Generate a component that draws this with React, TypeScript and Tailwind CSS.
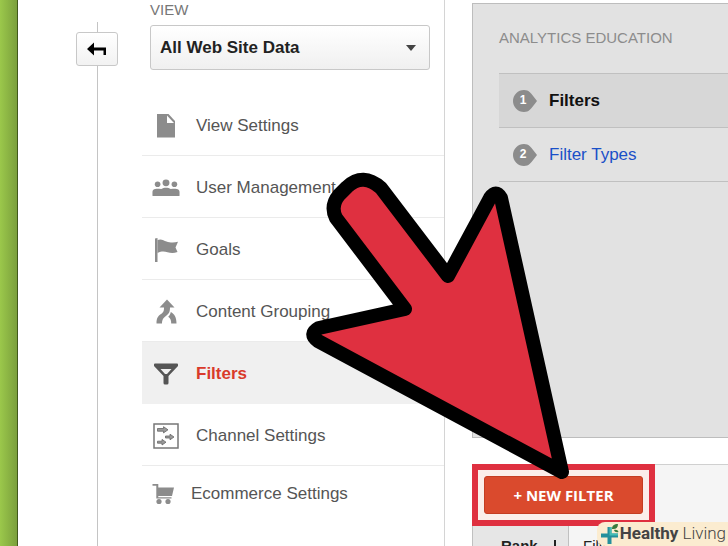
import React from "react";

const DocIcon = () => (
  <svg width="28" height="28" viewBox="0 0 28 28" fill="#8c8c8c">
    <path d="M5 2h11.500l6.500 7v16.500H5z" />
    <path d="M15 3.500v7.500h7z" fill="#fff" />
  </svg>
);

const UsersIcon = () => (
  <svg width="30" height="20" viewBox="0 0 30 20" fill="#8c8c8c">
    <circle cx="6" cy="6" r="3" />
    <circle cx="15" cy="4.500" r="3.700" />
    <circle cx="24" cy="6" r="3" />
    <path d="M.5 18v-4c0-2 2-3.200 4.500-3.200 2 0 3.500.2 5 .2 1.500-1 3-1.400 5-1.400s3.500.4 5 1.400c1.500 0 3-.2 5-.2 2.500 0 4.500 1.200 4.500 3.200v4q0 .7-.7.700H1.200q-.7 0-.7-.7z" />
  </svg>
);

const FlagIcon = () => (
  <svg width="26" height="26" viewBox="0 0 26 26" fill="#8c8c8c">
    <path d="M2 1.500 4.500 1v24H2z" />
    <path d="M4.500 3c4-1.500 6 .5 9 1.500s7 1.500 11.500.3l-2.500 5.700 2 4.500c-4 1.500-7 1-10 .2s-6-1.200-10 .8z" />
  </svg>
);

const MergeIcon = () => (
  <svg width="26" height="26" viewBox="0 0 26 26" fill="#8c8c8c">
    <path d="M14 .5 21.500 8.500H17c0 4.500-1 6-3.500 8S9 20 9 24.500H3.500c0-5.500 1.500-7.500 4.500-9.500 2.500-1.700 3-3 3-6.500H6.500z" />
    <path d="M17.800 13c3.500 2 5.700 5 5.700 11.500h-5.300c0-3.500-.7-5-3-6.800 1.500-1.300 2.300-2.900 2.600-4.700z" />
  </svg>
);

const FunnelIcon = () => (
  <svg width="26" height="24" viewBox="0 0 26 24" fill="#555">
    <path
      fillRule="evenodd"
      d="M1 2.500q0-1 1-1h22q1 0 1 1V4L15.500 14v7q0 1.500-1.500 1.500h-2q-1.500 0-1.500-1.500v-7L1 4zM7.500 7l4.500 5h2l4.500-5z"
    />
  </svg>
);

const ChannelIcon = () => (
  <svg width="26" height="26" viewBox="0 0 26 26">
    <rect x="1" y="1" width="24" height="24" fill="#fff" stroke="#777" strokeWidth="1.500" />
    <g fill="#999" stroke="#666" strokeWidth=".8">
      <path d="M4.500 5.500h6V3.700L15 6.800l-4.500 3.100V8.200h-6z" />
      <path d="M12.500 13H17v-1.800l4 2.800-4 2.800V15h-4.500z" />
      <path d="M4.500 18.200H9v-1.800l4 2.800-4 2.800v-1.800H4.500z" />
    </g>
  </svg>
);

const CartIcon = () => (
  <svg width="24" height="22" viewBox="0 0 24 22" fill="#8c8c8c">
    <path d="M.5 1h5.800v3.500H22l-2 8.500H6.300v1.200H19.500v1.300H4.300V2.800H.5z" />
    <circle cx="7" cy="18.500" r="2.600" />
    <circle cx="16" cy="18.500" r="2.600" />
  </svg>
);

const navItems = [
  { label: "View Settings", icon: <DocIcon /> },
  { label: "User Management", icon: <UsersIcon /> },
  { label: "Goals", icon: <FlagIcon /> },
  { label: "Content Grouping", icon: <MergeIcon /> },
  { label: "Filters", icon: <FunnelIcon />, active: true },
  { label: "Channel Settings", icon: <ChannelIcon /> },
];

const lessons = [
  { label: "Filters", active: true },
  { label: "Filter Types", active: false },
];

const Sidebar: React.FC = () => {
  return (
    <aside className="w-[303px] shrink-0 border-r border-[#d4d4d4]">
      <div className="pl-2 pr-3.5">
        <label htmlFor="view" className="block text-[15px] leading-5 text-[#777]">
          VIEW
        </label>
        <div className="relative mt-[5px]">
          <select
            id="view"
            className="block w-full h-[45px] pl-[9px] pr-8 appearance-none rounded-[3px] border border-[#c8c8c8] bg-linear-to-b from-white to-[#f0f0f0] text-[17px] font-bold text-[#222]"
          >
            <option>All Web Site Data</option>
          </select>
          <svg
            className="absolute right-3.5 top-5 pointer-events-none"
            width="10"
            height="6"
            viewBox="0 0 10 6"
          >
            <path d="M0 0h10L5 6z" fill="#444" />
          </svg>
        </div>
      </div>
      <nav className="mt-6">
        {navItems.map((item) => (
          <a
            key={item.label}
            href="#"
            className={
              item.active
                ? "flex items-center h-[62px] pl-2.5 pt-0.5 border-b border-[#f0f0f0] bg-[#f0f0f0] text-[17px] font-bold text-[#d93a2b]"
                : "flex items-center h-[62px] pl-2.5 pt-0.5 border-b border-[#ebebeb] text-[17px] text-[#555]"
            }
          >
            <span className="flex justify-center w-7 mr-4 shrink-0">
              {item.icon}
            </span>
            {item.label}
          </a>
        ))}
        <a
          href="#"
          className="flex items-center h-[54px] pl-2.5 pt-0.5 text-[17px] text-[#555]"
        >
          <span className="w-6 mr-[15px] shrink-0">
            <CartIcon />
          </span>
          Ecommerce Settings
        </a>
      </nav>
    </aside>
  );
};

const Education: React.FC = () => {
  return (
    <section className="h-[435px] pl-[26px] pt-6 border border-r-0 border-[#bdbdbd] bg-[#e2e2e2]">
      <h2 className="text-[15px] leading-5 text-[#8c8c8c]">
        ANALYTICS EDUCATION
      </h2>
      <ol className="mt-[25px] border-t border-[#c0c0c0]">
        {lessons.map((lesson, i) => (
          <li
            key={lesson.label}
            className={
              lesson.active
                ? "flex items-center h-[54px] pl-3.5 border-b border-[#c0c0c0] bg-[#d7d7d7]"
                : "flex items-center h-[54px] pl-3.5 border-b border-[#c0c0c0]"
            }
          >
            <span className="relative mr-3 w-6 h-[22px] text-center">
              <svg
                className="absolute inset-0"
                width="24"
                height="22"
                viewBox="0 0 24 22"
              >
                <path
                  d="M11 0c5 0 7 3 13 11-6 8-8 11-13 11A11 11 0 0 1 11 0z"
                  fill="#8c8c8c"
                />
              </svg>
              <span className="relative block pr-1 text-xs leading-5 font-bold text-white">
                {i + 1}
              </span>
            </span>
            <a
              href="#"
              className={
                lesson.active
                  ? "text-[17px] font-bold text-[#111]"
                  : "text-[17px] text-[#1a50c8]"
              }
            >
              {lesson.label}
            </a>
          </li>
        ))}
      </ol>
    </section>
  );
};

const FilterList: React.FC = () => {
  return (
    <section className="mt-[26px] bg-[#f5f5f5]">
      <div className="flex border-t border-[#d0d0d0]">
        <div className="-mt-px border-[6px] border-[#df3040] bg-[#fbeeea] p-1.5">
          <button className="flex items-center justify-center w-[159px] h-[38px] rounded-[3px] border border-[#c43d22] bg-[#da4a2d] font-['Open_Sans',sans-serif] text-[15px] font-bold text-white">
            + NEW FILTER
          </button>
        </div>
      </div>
      <table className="w-full text-left text-[15px] text-[#222]">
        <thead>
          <tr className="h-10">
            <th className="w-24 pl-7 border-x border-[#c0c0c0] bg-[#e6e6e6]">
              <span className="flex items-center gap-3">
                Rank
                <svg width="10" height="13" viewBox="0 0 10 13">
                  <path d="M4 0h2v8h4l-5 5-5-5h4z" fill="#222" />
                </svg>
              </span>
            </th>
            <th className="pl-3.5 font-normal">Filter Name</th>
          </tr>
        </thead>
      </table>
    </section>
  );
};

const App: React.FC = () => {
  return (
    <div className="relative flex h-screen overflow-hidden bg-white font-['Liberation_Sans',Arial,sans-serif]">
      <div className="w-[18px] shrink-0 border-r border-[#41591b] bg-linear-to-r from-[#9bc84b] to-[#7ba03c]" />

      {/* account rail */}
      <div className="flex flex-col items-center w-[124px] shrink-0 pl-[34px] pt-[22px]">
        <div className="w-px h-2.5 bg-[#c4c4c4]" />
        <button
          aria-label="Back"
          className="flex items-center justify-center w-[42px] h-[34px] shrink-0 rounded-[3px] border border-[#c8c8c8] bg-linear-to-b from-white to-[#f2f2f2]"
        >
          <svg width="20" height="14" viewBox="0 0 20 14">
            <path d="M0 7 7 .5v5h12V13h-2.500V8.500H7v5z" fill="#000" />
          </svg>
        </button>
        <div className="w-px grow bg-[#c4c4c4]" />
      </div>

      <Sidebar />

      <main className="grow min-w-0 pl-[27px] pt-[3px]">
        <Education />
        <FilterList />
      </main>

      {/* pointer to the new filter button */}
      <svg
        className="absolute left-[300px] top-[165px] pointer-events-none"
        width="280"
        height="320"
        viewBox="300 165 280 320"
        aria-hidden="true"
      >
        <path
          d="M381 188 448 276 490 198Q496 189 501 198L562 472 318 341Q308 334 319 328L405 309 336 218Q330 206 339 195L347 187Q363 172 381 188Z"
          fill="#df3040"
          stroke="#000"
          strokeWidth="14"
          strokeLinejoin="round"
        />
      </svg>

      <div className="absolute right-0 bottom-0 flex items-center h-6 pl-1 pr-0.5 rounded-l-lg bg-[#fbecd0] font-[Roboto,sans-serif] text-[17px] text-[#444]">
        <svg width="18" height="22" viewBox="0 0 18 22">
          <path d="M6.500 4h4v6.500H17v4h-6.500V21h-4v-6.500H0v-4h6.500z" fill="#258f9c" />
          <path d="M8.500 4h2v6.500H17v2H8.500z" fill="#45bdb5" />
          <path d="M11 6c0-3.500 2-5 6-5 0 4-2 5.500-6 5z" fill="#397a3d" />
          <path d="M13 7c2-.8 4 0 4.500 2-2 .7-4 0-4.500-2z" fill="#397a3d" />
        </svg>
        <span className="ml-px font-bold">Healthy</span>
        <span className="ml-1 font-light">Living</span>
      </div>
    </div>
  );
};

export default App;
